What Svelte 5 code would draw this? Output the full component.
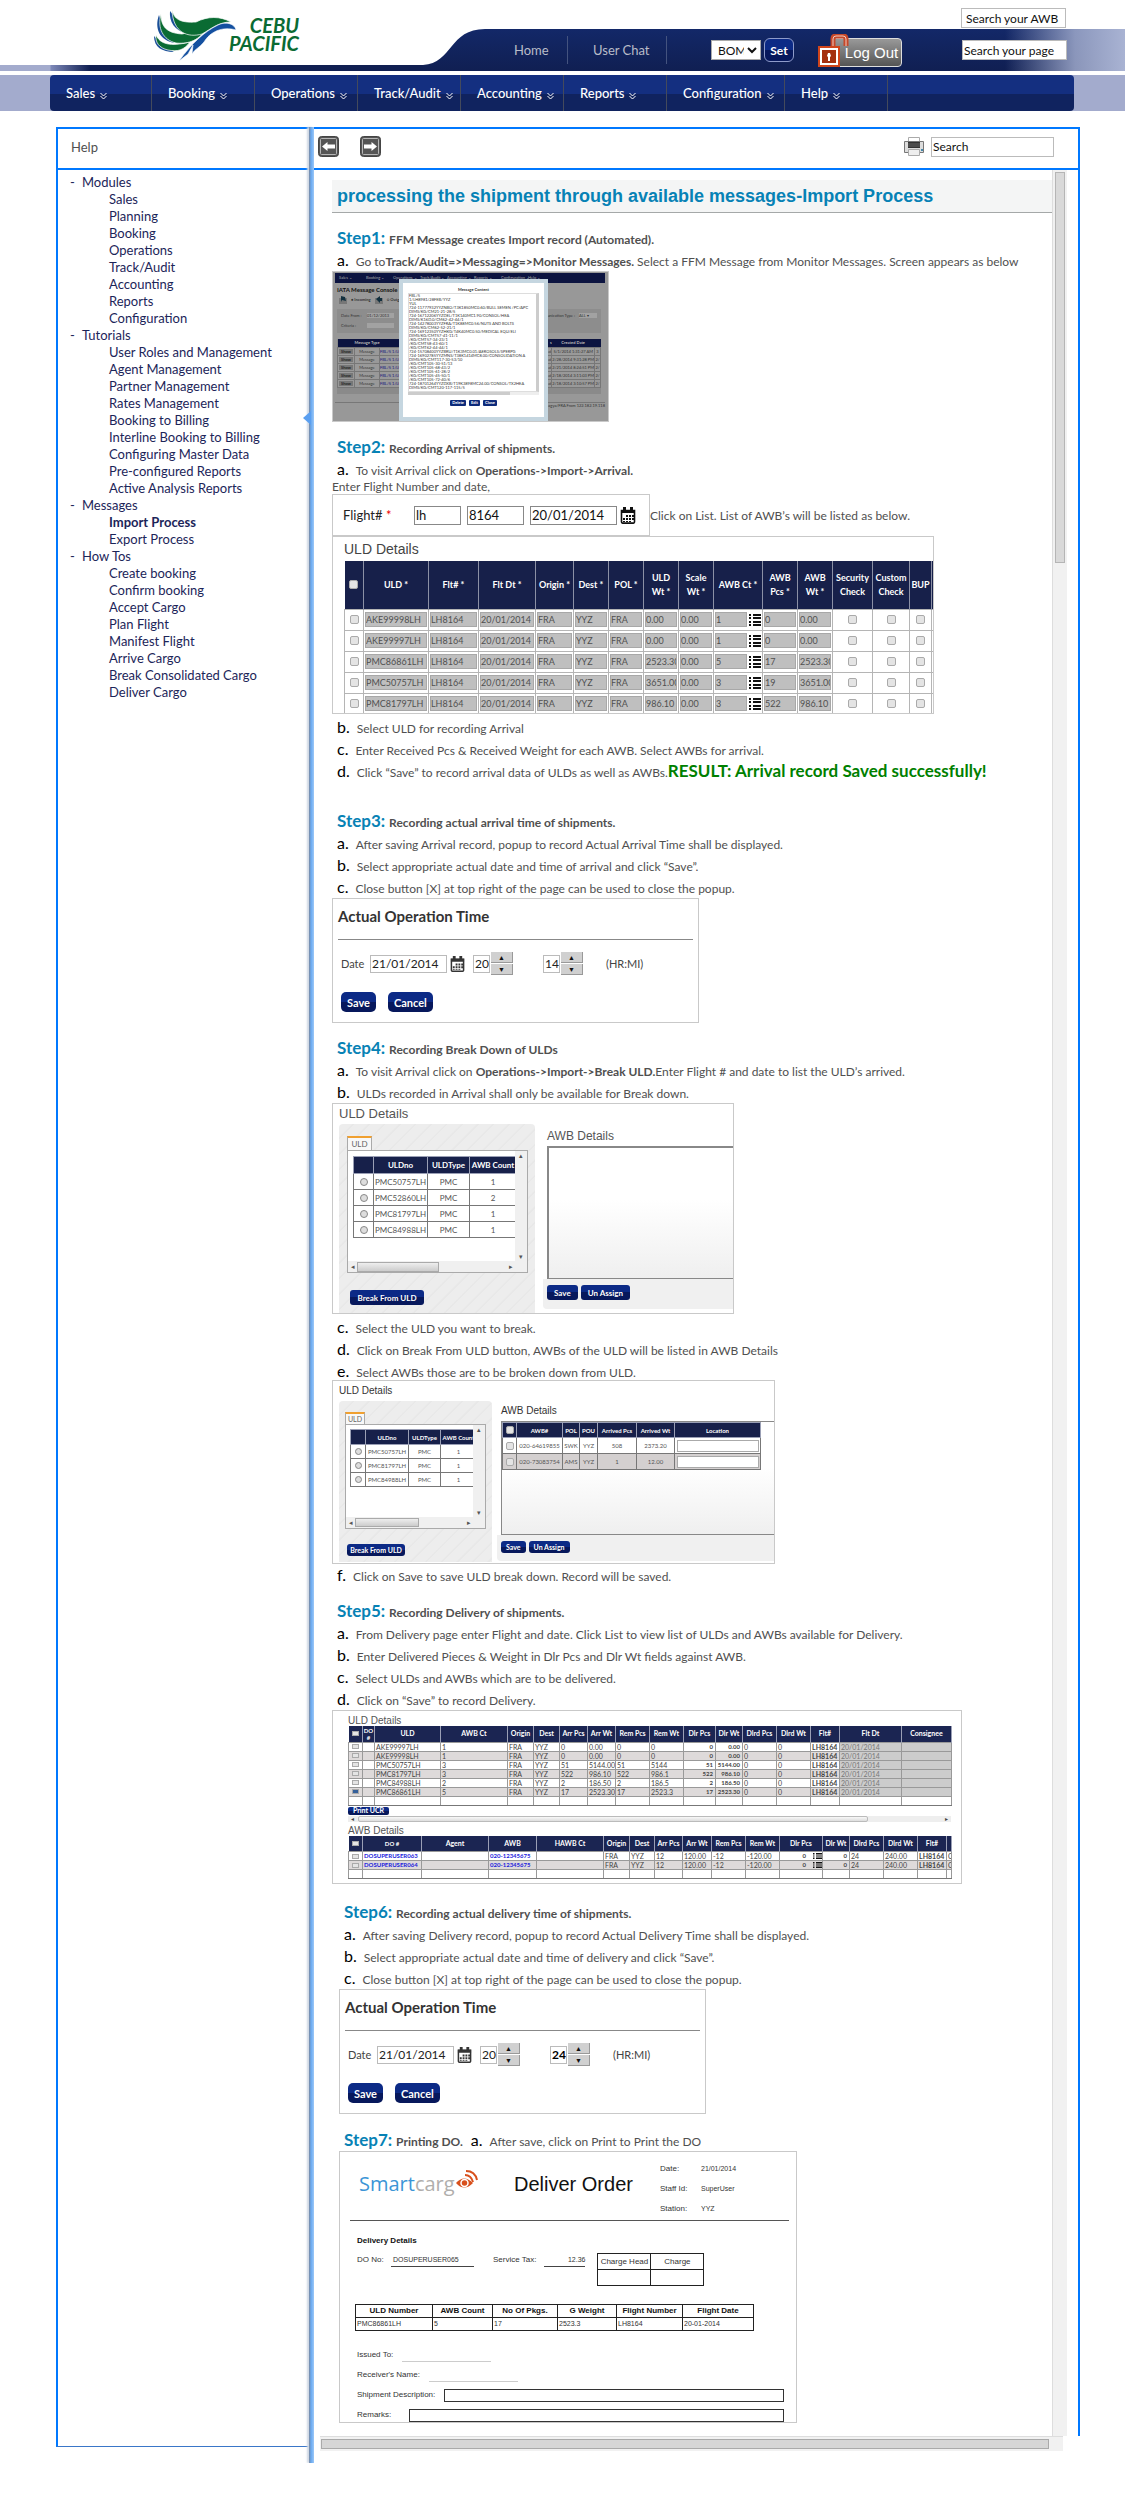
<script>
  const menu = [
    { label: 'Sales', w: 102 }, { label: 'Booking', w: 103 }, { label: 'Operations', w: 103 },
    { label: 'Track/Audit', w: 103 }, { label: 'Accounting', w: 103 }, { label: 'Reports', w: 103 },
    { label: 'Configuration', w: 118 }, { label: 'Help', w: 103 }
  ];
  const tree = [
    { name: 'Modules', items: ['Sales', 'Planning', 'Booking', 'Operations', 'Track/Audit', 'Accounting', 'Reports', 'Configuration'] },
    { name: 'Tutorials', items: ['User Roles and Management', 'Agent Management', 'Partner Management', 'Rates Management', 'Booking to Billing', 'Interline Booking to Billing', 'Configuring Master Data', 'Pre-configured Reports', 'Active Analysis Reports'] },
    { name: 'Messages', items: ['Import Process', 'Export Process'] },
    { name: 'How Tos', items: ['Create booking', 'Confirm booking', 'Accept Cargo', 'Plan Flight', 'Manifest Flight', 'Arrive Cargo', 'Break Consolidated Cargo', 'Deliver Cargo'] }
  ];

  const consoleMenu = ['Sales', 'Booking', 'Operations', 'Track/Audit', 'Accounting', 'Reports', 'Configuration', 'Help'];
  const consoleRows = [
    ['5/1/2014 1:31:27 AM', '3'], ['2/28/2014 9:31:28 PM', '2/'], ['2/21/2014 8:24:51 PM', '2/'],
    ['2/18/2014 3:11:03 PM', '2/'], ['2/18/2014 3:10:57 PM', '2/']
  ];
  const message = `FBL/5
1/LH8981/28FEB/YYZ
YUL
724-11777932YYZNBO/T3K1850MC0.60/BULL SEMEN /PC/APC
DIMS/KG/CM21-21-28/5
724-16712206YYZDEL/T1K140MC1.90/CONSOL/HEA
DIMS/K16D.0/CM62-42-44/1
724-14278003YYZFRA/T1K88MC0.56/NUTS AND BOLTS
DIMS/KG/CM62-52-21/1
724-16912350YYZHKG/T4K40MC0.50/MEDICAL EQU/ELI
DIMS/KG/CMT57-41-11/1
/KG/CMT57-34-23/1
/KG/CMT58-43-60/1
/KG/CMT62-44-44/1
724-15708400YYZBRU/T1K3MC0.01/AEROSOLS/SPERPG
724-16902785YYZMNS/T38K1414MC8.00/CONSOLIDATION A
DIMS/KG/CMT117-30-53/10
/KG/CMT105-30-51/13
/KG/CMT105-68-43/2
/KG/CMT105-61-28/2
/KG/CMT105-45-50/1
/KG/CMT105-72-40/6
724-18701264YYZDXB/T19K3898MC24.00/CONSOL/TX2HEA
DIMS/KG/CMT120-117-115/5`;

  const arrCols = [19, 65, 50, 57, 38, 35, 35, 35, 35, 49, 35, 35, 40, 37, 22, 3];
  const arrHead = ['ULD *', 'Flt# *', 'Flt Dt *', 'Origin *', 'Dest *', 'POL *', 'ULD Wt\u00a0*', 'Scale Wt\u00a0*', 'AWB Ct *', 'AWB Pcs\u00a0*', 'AWB Wt\u00a0*', 'Security Check', 'Custom Check', 'BUP'];
  const arrRows = [
    ['AKE99998LH', '0.00', '1', '0', '0.00'], ['AKE99997LH', '0.00', '1', '0', '0.00'],
    ['PMC86861LH', '2523.30', '5', '17', '2523.30'], ['PMC50757LH', '3651.00', '3', '19', '3651.00'],
    ['PMC81797LH', '986.10', '3', '522', '986.10']
  ].map(([u, w, c, p, aw]) => [u, 'LH8164', '20/01/2014', 'FRA', 'YYZ', 'FRA', w, '0.00', c, p, aw]);

  const ulds1 = [['PMC50757LH', 1], ['PMC52860LH', 2], ['PMC81797LH', 1], ['PMC84988LH', 1]];
  const ulds2 = [['PMC50757LH', 1], ['PMC81797LH', 1], ['PMC84988LH', 1]];
  const awbCols = [14, 46, 17, 18, 39, 38, 86];
  const awbRows = [['020-64619855', 'SWK', 'YYZ', '508', '2373.20'], ['020-73083754', 'AMS', 'YYZ', '1', '12.00']];

  const dlvCols = [14, 12, 66, 67, 26, 26, 28, 28, 34, 34, 32, 27, 34, 34, 29, 62, 50];
  const dlvHead = ['DO #', 'ULD', 'AWB Ct', 'Origin', 'Dest', 'Arr Pcs', 'Arr Wt', 'Rem Pcs', 'Rem Wt', 'Dlr Pcs', 'Dlr Wt', 'Dlrd Pcs', 'Dlrd Wt', 'Flt#', 'Flt Dt', 'Consignee'];
  const dlvRows = [
    ['AKE99997LH', '1', '0', '0.00', '0', '0', '0', '0.00'], ['AKE99998LH', '1', '0', '0.00', '0', '0', '0', '0.00'],
    ['PMC50757LH', '3', '51', '5144.00', '51', '5144', '51', '5144.00'], ['PMC81797LH', '3', '522', '986.10', '522', '986.1', '522', '986.10'],
    ['PMC84988LH', '2', '2', '186.50', '2', '186.5', '2', '186.50'], ['PMC86861LH', '5', '17', '2523.30', '17', '2523.3', '17', '2523.30']
  ].map(([u, ct, p, w, rp, rw, dp, dw]) => ['', u, ct, 'FRA', 'YYZ', p, w, rp, rw, dp, dw, '0', '0', 'LH8164', '20/01/2014', '']);
  const dawCols = [14, 59, 67, 48, 67, 26, 25, 28, 29, 34, 34, 43, 27, 34, 34, 29, 5];
  const dawHead = ['DO #', 'Agent', 'AWB', 'HAWB Ct', 'Origin', 'Dest', 'Arr Pcs', 'Arr Wt', 'Rem Pcs', 'Rem Wt', 'Dlr Pcs', 'Dlr Wt', 'Dlrd Pcs', 'Dlrd Wt', 'Flt#', ''];
  const dawRows = ['063', '064'].map((n) => ['DOSUPERUSER' + n, '', '020-12345675', '', 'FRA', 'YYZ', '12', '120.00', '-12', '-120.00', '0', '0', '24', '240.00', 'LH8164', 'C']);

  const doCols = [77, 60, 65, 59, 66, 71];
  const doHead = ['ULD Number', 'AWB Count', 'No Of Pkgs.', 'G Weight', 'Flight Number', 'Flight Date'];
  const doRow = ['PMC86861LH', '5', '17', '2523.3', 'LH8164', '20-01-2014'];
</script>

{#snippet cols(list)}
  <colgroup>{#each list as w}<col style:width="{w}px" />{/each}</colgroup>
{/snippet}

{#snippet calendar()}
  <svg class="cal" viewBox="0 0 16 17" aria-hidden="true">
    <path d="M1.5 3.5h13v11.6q0 1-1 1h-11q-1 0-1-1z" fill="#fff" stroke="#111" stroke-width="1.6" />
    <path d="M1 3h14v3H1zM3 0h3v4H3zM10 0h3v4h-3z" fill="#111" />
    <path d="M6 8h2v2H6zM9 8h2v2H9zM12 8h2v2h-2zM3 11h2v2H3zM6 11h2v2H6zM9 11h2v2H9zM12 11h2v2h-2zM3 14h2v1H3zM6 14h2v1H6zM9 14h2v1H9z" fill="#111" />
  </svg>
{/snippet}

{#snippet listIcon()}
  <svg class="list-icon" viewBox="0 0 12 12" preserveAspectRatio="none" aria-hidden="true">
    <path d="M0 0h2v2H0zM4 0h8v2H4zM0 3h2v2H0zM4 3h8v2H4zM0 7h2v2H0zM4 7h8v2H4zM0 10h2v2H0zM4 10h8v2H4z" fill="#111" />
  </svg>
{/snippet}

{#snippet step(n, title)}
  <h2 class="step-title"><span>Step{n}:</span> {title}</h2>
{/snippet}

{#snippet opTime(id, minutes, strong)}
  <form class="shot op" onsubmit={(e) => e.preventDefault()}>
    <h3>Actual Operation Time</h3>
    <div class="op-row">
      <label for="{id}-date">Date</label>
      <input id="{id}-date" class="op-date" value="21/01/2014" />
      {@render calendar()}
      <span class="spin">
        <input aria-label="Hours" value="20" />
        <span class="arrows"><button type="button" aria-label="Hour up">▲</button><button type="button" aria-label="Hour down">▼</button></span>
      </span>
      <span class="spin minutes">
        <input aria-label="Minutes" class:strong value={minutes} />
        <span class="arrows"><button type="button" aria-label="Minute up">▲</button><button type="button" aria-label="Minute down">▼</button></span>
      </span>
      <span class="unit">(HR:MI)</span>
    </div>
    <div class="op-actions"><button class="navy">Save</button><button type="button" class="navy">Cancel</button></div>
  </form>
{/snippet}

{#snippet uldPanel(rows, widths, group)}
  <div class="uld-panel">
    <button class="tab">ULD</button>
    <div class="uld-list">
      <div class="uld-view">
        <table>
          {@render cols(widths)}
          <thead><tr><th></th><th>ULDno</th><th>ULDType</th><th>AWB Count</th></tr></thead>
          <tbody>
            {#each rows as [u, c]}
              <tr><td><input type="radio" name={group} aria-label={u} /></td><td>{u}</td><td>PMC</td><td>{c}</td></tr>
            {/each}
          </tbody>
        </table>
      </div>
      <div class="vbar"><i>▴</i><i>▾</i></div>
      <div class="hbar"><i>◂</i><b></b><i>▸</i></div>
    </div>
    <button class="navy">Break From ULD</button>
  </div>
{/snippet}

<header class="top">
  <div class="brand">
    <a href="#home" class="logo">
      <svg viewBox="0 0 84 52" aria-hidden="true">
        <g fill="#1a4f98">
          <path d="M16 2C15 12 20 22 34 25L24 12z" /><path d="M5 6C0 20 6 31 20 34L10 22z" /><path d="M0 27C0 38 8 43 20 43L8 36z" />
        </g>
        <g fill="#0a6b33" stroke="#fff" stroke-width=".7">
          <path d="M2 26C6 35 16 38 36 33 30 41 24 43 14 41 5 39 1 33 2 26z" />
          <path d="M7 5C7 17 12 24 28 25L52 20C44 33 32 35 22 34 9 31 3 19 7 5z" />
          <path d="M18 1C20 10 26 14 42 13 54 7 66 7 77 13 64 13 57 20 48 25 34 29 19 24 18 1z" />
        </g>
        <path d="M82 21C81 15 72 12 64 16 50 23 38 34 25 52L34 45 39 36 38 45C42 39 44 40 50 33 56 23 68 17 82 21z" fill="#1450a0" stroke="#fff" stroke-width=".6" />
      </svg>
      <span>CEBU<br />PACIFIC</span>
    </a>
  </div>
  <svg class="swoop" viewBox="0 0 62 42" aria-hidden="true">
    <defs><linearGradient id="sw" x2="0" y2="1"><stop offset="0" stop-color="#132868" /><stop offset="1" stop-color="#101f52" /></linearGradient></defs>
    <path d="M0 36C30 34 26 0 62 0V42H0z" fill="url(#sw)" />
  </svg>
  <div class="top-right">
    <input class="find" aria-label="Search your AWB" value="Search your AWB" />
    <nav class="bar">
      <a href="#home">Home</a><a href="#chat" class="chat">User Chat</a>
      <select aria-label="Station"><option>BOM</option></select>
      <button class="navy set">Set</button>
      <button class="logout">
        <svg viewBox="0 0 31 33" aria-hidden="true">
          <path d="M15 15V5q0-3 3-3h7q3 0 3 3v7" fill="none" stroke="#c5482a" stroke-width="5" />
          <path d="M15 15V5q0-3 3-3h7q3 0 3 3v7" fill="none" stroke="#f3c9bc" stroke-width="1" />
          <path d="M1 13h20v19H1z" fill="#fff" stroke="#d0451b" stroke-width="2" /><path d="M4 16h14v13H4z" fill="#a5300f" />
          <path d="M10 19h2l1 3-1 1v4h-2v-4l-1-1z" fill="#fff" />
        </svg>
        <span>Log Out</span>
      </button>
      <input class="find page" aria-label="Search your page" value="Search your page" />
    </nav>
  </div>
</header>

<div class="menu-band">
  <nav class="menu">
    {#each menu as m}
      <a href="#{m.label}" style:width="{m.w}px">{m.label}
        <svg viewBox="0 0 7 8" aria-hidden="true"><path d="M.5 1 3.5 4 6.5 1M.5 4 3.5 7 6.5 4" fill="none" stroke="#fff" stroke-width="1" /></svg>
      </a>
    {/each}
  </nav>
</div>

<div class="frame">
  <aside>
    <div class="side-head">Help</div>
    <ul class="tree">
      {#each tree as g}
        <li><span class="group"><i>-</i>{g.name}</span>
          <ul>{#each g.items as it}<li><a href="#{it}" class:current={it === 'Import Process'}>{it}</a></li>{/each}</ul>
        </li>
      {/each}
    </ul>
  </aside>
  <div class="splitter"><svg viewBox="0 0 8 14" aria-hidden="true"><path d="M8 0v14L0 7z" fill="#5a9ff0" /></svg></div>
  <main>
    <div class="tools">
      <button aria-label="Back"><svg viewBox="0 0 21 21"><rect x=".5" y=".5" width="20" height="20" rx="3" fill="#555" stroke="#444" /><rect x="2.5" y="2.5" width="16" height="16" rx="1" fill="none" stroke="#b5b5b5" /><path d="M4 10.5 9.5 6v2.500H17v4H9.500V15z" fill="#fff" /></svg></button>
      <button aria-label="Forward"><svg viewBox="0 0 21 21"><rect x=".5" y=".5" width="20" height="20" rx="3" fill="#555" stroke="#444" /><rect x="2.5" y="2.5" width="16" height="16" rx="1" fill="none" stroke="#b5b5b5" /><path d="M17 10.5 11.500 6v2.500H4v4h7.500V15z" fill="#fff" /></svg></button>
      <button class="print" aria-label="Print"><svg viewBox="0 0 20 19"><path d="M4.5.5h11V6h-11z" fill="#fff" stroke="#aaa" /><path d="M.5 4.5h19v11H.5z" fill="#ddd" stroke="#777" /><path d="M4 5h12v6H4z" fill="#333" /><path d="M4 7h12M4 9h12" stroke="#666" /><path d="M4.5 12.500h11v6h-11z" fill="#eee" stroke="#aaa" /><path d="M17 12h2v2h-2z" fill="#48a" /></svg></button>
      <input class="find search" aria-label="Search" value="Search" />
    </div>
    <div class="viewport">
      <article>
        <h1>processing the shipment through available messages-Import Process</h1>

        <section>
          {@render step(1, 'FFM Message creates Import record (Automated).')}
          <p class="item"><b>a.</b><span>Go to<strong>Track/Audit=&gt;Messaging=&gt;Monitor Messages.</strong> Select a FFM Message from Monitor Messages. Screen appears as below</span></p>
          <div class="shot console">
            <div class="c-menu">{#each consoleMenu as m}<span>{m} ⌄</span>{/each}</div>
            <h3>IATA Message Console</h3>
            <div class="c-radios"><svg viewBox="0 0 8 8" aria-hidden="true"><path d="M0 2h8v6H0z" fill="#777" /><path d="M2 0l4 1 1 4-4-1-1 2z" fill="#12303f" /></svg>● Incoming<svg viewBox="0 0 8 8" aria-hidden="true"><path d="M0 2h8v6H0z" fill="#777" /><path d="M5 0L1 3l4 4V5h2V2H5z" fill="#12303f" /></svg>○ Outg</div>
            <div class="c-filter">
              <span>Date From :</span><i>01/12/2013</i><span class="c-type">mmunication Type :</span><i class="c-all">ALL ▾</i>
              <span>Criteria :</span><i></i>
            </div>
            <div class="c-table">
              <table>
                {@render cols([17, 24, 130, 44, 42, 6])}
                <thead><tr><th></th><th>Message Type</th><th></th><th class="right">s</th><th>Created Date</th><th></th></tr></thead>
                <tbody>{#each consoleRows as [d, e]}<tr><td><button>Show</button></td><td>Message</td><td class="link">FBL/5 1/LH8</td><td class="right">ed</td><td>{d}</td><td>{e}</td></tr>{/each}</tbody>
              </table>
            </div>
            <p>Bhagya/FRA From 122.182.19.118</p>
            <div class="modal">
              <h4>Message Content</h4>
              <pre>{message}</pre>
              <div class="modal-scroll"><b></b></div>
              <div class="modal-actions"><button>Delete</button><button>Edit</button><button>Close</button></div>
            </div>
          </div>
        </section>

        <section>
          {@render step(2, 'Recording Arrival of shipments.')}
          <p class="item"><b>a.</b><span>To visit Arrival click on <strong>Operations-&gt;Import-&gt;Arrival.</strong></span></p>
          <p class="lead">Enter Flight Number and date,</p>
          <div class="flight-line">
            <form class="shot flight" onsubmit={(e) => e.preventDefault()}>
              <label for="flt">Flight# <em>*</em></label>
              <input id="flt" class="f-a" value="lh" /><input class="f-b" aria-label="Flight number" value="8164" /><input class="f-c" aria-label="Flight date" value="20/01/2014" />
              {@render calendar()}
            </form>
            <span>Click on List. List of AWB’s will be listed as below.</span>
          </div>
          <div class="shot arrivals">
            <h3>ULD Details</h3>
            <table>
              {@render cols(arrCols)}
              <thead><tr><th><input type="checkbox" aria-label="Select all" /></th>{#each arrHead as h}<th>{h}</th>{/each}<th></th></tr></thead>
              <tbody>
                {#each arrRows as r}
                  <tr>
                    <td class="mid"><input type="checkbox" disabled aria-label={r[0]} /></td>
                    {#each r as v, i}<td><div><input class="cell" aria-label={arrHead[i]} value={v} />{#if i === 8}{@render listIcon()}{/if}</div></td>{/each}
                    {#each ['Security', 'Custom', 'BUP'] as c}<td class="mid"><input type="checkbox" aria-label={c} /></td>{/each}
                    <td></td>
                  </tr>
                {/each}
              </tbody>
            </table>
          </div>
          <p class="item after"><b>b.</b><span>Select ULD for recording Arrival</span></p>
          <p class="item"><b>c.</b><span>Enter Received Pcs &amp; Received Weight for each AWB. Select AWBs for arrival.</span></p>
          <p class="item"><b>d.</b><span>Click “Save” to record arrival data of ULDs as well as AWBs.<strong class="result">RESULT: Arrival record Saved successfully!</strong></span></p>
        </section>

        <section class="far">
          {@render step(3, 'Recording actual arrival time of shipments.')}
          <p class="item"><b>a.</b><span>After saving Arrival record, popup to record Actual Arrival Time shall be displayed.</span></p>
          <p class="item"><b>b.</b><span>Select appropriate actual date and time of arrival and click “Save”.</span></p>
          <p class="item"><b>c.</b><span>Close button [X] at top right of the page can be used to close the popup.</span></p>
          {@render opTime('arrival', '14', false)}
        </section>

        <section>
          {@render step(4, 'Recording Break Down of ULDs')}
          <p class="item"><b>a.</b><span>To visit Arrival click on <strong>Operations-&gt;Import-&gt;Break ULD.</strong>Enter Flight # and date to list the ULD’s arrived.</span></p>
          <p class="item"><b>b.</b><span>ULDs recorded in Arrival shall only be available for Break down.</span></p>
          <div class="shot break">
            <h3>ULD Details</h3>
            <div class="halves">
              {@render uldPanel(ulds1, [20, 54, 42, 47], 'u1')}
              <div class="awb-panel">
                <h3>AWB Details</h3>
                <div class="awb-list"></div>
                <div class="awb-actions"><button class="navy">Save</button><button class="navy">Un Assign</button></div>
              </div>
            </div>
          </div>
          <p class="item after"><b>c.</b><span>Select the ULD you want to break.</span></p>
          <p class="item"><b>d.</b><span>Click on Break From ULD button, AWBs of the ULD will be listed in AWB Details</span></p>
          <p class="item"><b>e.</b><span>Select AWBs those are to be broken down from ULD.</span></p>
          <div class="shot break small tight">
            <h3>ULD Details</h3>
            <div class="halves">
              {@render uldPanel(ulds2, [15, 43, 32, 36], 'u2')}
              <div class="awb-panel">
                <h3>AWB Details</h3>
                <div class="awb-list">
                  <table>
                    {@render cols(awbCols)}
                    <thead><tr><th><input type="checkbox" aria-label="Select all" /></th><th>AWB#</th><th>POL</th><th>POU</th><th>Arrived Pcs</th><th>Arrived Wt</th><th>Location</th></tr></thead>
                    <tbody>{#each awbRows as r}<tr><td><input type="checkbox" aria-label={r[0]} /></td>{#each r as v}<td>{v}</td>{/each}<td><input class="loc" aria-label="Location" /></td></tr>{/each}</tbody>
                  </table>
                </div>
                <div class="awb-actions"><button class="navy">Save</button><button class="navy">Un Assign</button></div>
              </div>
            </div>
          </div>
          <p class="item"><b>f.</b><span>Click on Save to save ULD break down. Record will be saved.</span></p>
        </section>

        <section>
          {@render step(5, 'Recording Delivery of shipments.')}
          <p class="item"><b>a.</b><span>From Delivery page enter Flight and date. Click List to view list of ULDs and AWBs available for Delivery.</span></p>
          <p class="item"><b>b.</b><span>Enter Delivered Pieces &amp; Weight in Dlr Pcs and Dlr Wt fields against AWB.</span></p>
          <p class="item"><b>c.</b><span>Select ULDs and AWBs which are to be delivered.</span></p>
          <p class="item"><b>d.</b><span>Click on “Save” to record Delivery.</span></p>
          <div class="shot delivery">
            <h3>ULD Details</h3>
            <table>
              {@render cols(dlvCols)}
              <thead><tr><th><input type="checkbox" aria-label="Select all" /></th>{#each dlvHead as h}<th>{h}</th>{/each}</tr></thead>
              <tbody>
                {#each dlvRows as r, n}
                  <tr><td class="mid"><input type="checkbox" aria-label={r[1]} checked={n === 5} /></td>{#each r as v, i}<td class:entry={i === 9 || i === 10} class:flt={i === 13} class:grey={i > 13}>{v}</td>{/each}</tr>
                {/each}
                <tr>{#each dlvCols as _}<td></td>{/each}</tr>
              </tbody>
            </table>
            <button class="navy">Print UCR</button>
            <div class="long-bar"><i>◂</i><b></b><i>▸</i></div>
            <h3>AWB Details</h3>
            <table>
              {@render cols(dawCols)}
              <thead><tr><th><input type="checkbox" aria-label="Select all" /></th>{#each dawHead as h}<th>{h}</th>{/each}</tr></thead>
              <tbody>
                {#each dawRows as r}
                  <tr><td class="mid"><input type="checkbox" aria-label={r[0]} /></td>{#each r as v, i}<td class:link={i === 0 || i === 2} class:entry={i === 10 || i === 11} class:with-icon={i === 10} class:flt={i === 14}>{v}{#if i === 10}{@render listIcon()}{/if}</td>{/each}</tr>
                {/each}
                <tr>{#each dawCols as _}<td></td>{/each}</tr>
              </tbody>
            </table>
          </div>
        </section>

        <section class="indent">
          {@render step(6, 'Recording actual delivery time of shipments.')}
          <p class="item"><b>a.</b><span>After saving Delivery record, popup to record Actual Delivery Time shall be displayed.</span></p>
          <p class="item"><b>b.</b><span>Select appropriate actual date and time of delivery and click “Save”.</span></p>
          <p class="item"><b>c.</b><span>Close button [X] at top right of the page can be used to close the popup.</span></p>
          {@render opTime('delivery', '24', true)}
        </section>

        <section class="indent">
          <div class="inline-step">
            {@render step(7, 'Printing DO.')}
            <p class="item"><b>a.</b><span>After save, click on Print to Print the DO</span></p>
          </div>
          <div class="shot order">
            <div class="o-head">
              <div class="smart"><span>Smart</span><i>carg</i>
                <svg viewBox="0 0 24 20" aria-hidden="true"><path d="M1 13q8-9 17 0-9 9-17 0z" fill="#d8501c" /><circle cx="9.5" cy="13" r="3.5" fill="none" stroke="#fff" stroke-width="1.5" /><path d="M10 5q6 0 8 7M11 1q9 0 11 9" fill="none" stroke="#d8501c" stroke-width="2" /></svg>
              </div>
              <h3>Deliver Order</h3>
              <dl><dt>Date:</dt><dd>21/01/2014</dd><dt>Staff Id:</dt><dd>SuperUser</dd><dt>Station:</dt><dd>YYZ</dd></dl>
            </div>
            <h4>Delivery Details</h4>
            <div class="o-row">
              <span>DO No:</span><u class="do-no">DOSUPERUSER065</u><span>Service Tax:</span><u class="tax">12.36</u>
              <table class="charge"><thead><tr><th>Charge Head</th><th>Charge</th></tr></thead><tbody><tr><td></td><td></td></tr></tbody></table>
            </div>
            <table class="o-table">
              {@render cols(doCols)}
              <thead><tr>{#each doHead as h}<th>{h}</th>{/each}</tr></thead>
              <tbody><tr>{#each doRow as v}<td>{v}</td>{/each}</tr></tbody>
            </table>
            <div class="o-fields">
              <label>Issued To:<input class="line short" /></label>
              <label>Receiver's Name:<input class="line" /></label>
              <label>Shipment Description:<input class="box" /></label>
              <label>Remarks:<input class="box wide" /></label>
            </div>
          </div>
        </section>
      </article>
      <div class="page-vbar"><b></b></div>
    </div>
    <div class="page-hbar"><b></b></div>
  </main>
</div>

<style>
  :global(body) { background: #fff; font-family: Lato, 'Liberation Sans', sans-serif; font-size: 12px; color: #505050; }
  :global(*) { box-sizing: border-box; }
  h1, h2, h3, h4, p, ul, dl, dd, pre { margin: 0; padding: 0; font-weight: normal; }
  ul { list-style: none; }
  i, em, u { font-style: normal; text-decoration: none; }
  a { text-decoration: none; color: inherit; }
  input, button, select { font-family: inherit; margin: 0; padding: 0; border-radius: 0; }
  button { border: 0; background: none; }
  svg { display: block; flex: none; }
  table { border-collapse: collapse; table-layout: fixed; }
  th, td { padding: 0; overflow: hidden; white-space: nowrap; }
  input[type='checkbox'] { appearance: none; background: #e4e4e4; border: 1px solid #aaa; border-radius: 2px; width: 9px; height: 9px; display: block; margin: 0 auto; }
  input[type='radio'] { appearance: none; background: #ddd; border: 1px solid #888; border-radius: 50%; width: 8px; height: 8px; display: block; margin: 0 auto; }
  .navy { background: linear-gradient(#0c2a86 50%, #07185c 50%); color: #fff; font-weight: bold; border-radius: 5px; }

  .top { display: flex; height: 71px; }
  .brand { width: 423px; padding: 9px 0 0 154px; background: linear-gradient(90deg, #a3abcd 50px, #7d88b8 51px, #101f52 90px) bottom / 100% 6px no-repeat; }
  .logo { display: flex; width: 150px; }
  .logo svg { width: 84px; height: 52px; }
  .logo span { flex: none; width: 76px; margin-left: -15px; padding-top: 7px; text-align: right; color: #0a6b33; font: italic bold 20px/18px Lato, sans-serif; }
  .swoop { width: 62px; height: 42px; margin-top: 29px; }
  .top-right { flex: 1; display: flex; flex-direction: column; align-items: flex-end; padding-top: 8px; }
  .find { width: 105px; height: 20px; border: 1px solid #bbb; background: #fff; color: #111; font-size: 12px; padding-left: 1px; }
  .top-right > .find { margin: 0 59px 1px 0; padding-left: 4px; }
  .bar { width: 100%; height: 42px; display: flex; align-items: center; padding-right: 58px; color: #b9bcc8; font-size: 13px;
    background: linear-gradient(90deg, transparent calc(100% - 120px), #a9b3d3cc calc(100% - 50px), #a9b3d3), linear-gradient(#132868, #101f52); }
  .bar a { width: 83px; padding-left: 29px; line-height: 28px; border-right: 1px solid #44537f; white-space: nowrap; }
  .bar .chat { width: 99px; padding-left: 25px; }
  .bar select { width: 50px; height: 20px; margin-left: 44px; border: 1px solid #aaa; background: #fff; font-size: 12px; padding-left: 2px; color: #111; }
  .set { width: 30px; height: 24px; margin-left: 3px; border: 1px solid #8e9bca; border-radius: 6px; font-size: 12px; }
  .logout { display: flex; align-items: flex-end; margin-left: 24px; height: 34px; }
  .logout svg { width: 31px; height: 33px; margin-right: -18px; z-index: 1; }
  .logout span { width: 71px; height: 29px; border: 1px solid #ddd; border-radius: 4px; background: linear-gradient(#999, #555); color: #fff; font: 15px/28px 'Liberation Sans', sans-serif; padding-left: 10px; text-align: center; }
  .page { margin-left: auto; }

  .menu-band { margin-top: 4px; padding: 0 51px 0 50px; background: #a3abcd; }
  .menu { display: flex; height: 36px; border-radius: 4px; background: linear-gradient(#142f80 52%, #10235f 52%); }
  .menu a { display: flex; align-items: center; justify-content: flex-start; gap: 5px; padding-left: 16px; border-right: 1px solid #444a5c; color: #fff; font-size: 13px; font-weight: 500; line-height: 36px; white-space: nowrap; }
  .menu svg { width: 7px; height: 8px; margin-top: 6px; }

  .frame { display: flex; margin: 16px 45px 0 56px; }
  aside { width: 253px; margin-bottom: 16px; border: 2px solid #0078ff; border-right: 0; border-bottom: 1px solid #3a76c8; }
  .side-head { height: 41px; border-bottom: 2px solid #0078ff; padding-left: 13px; font-size: 13px; line-height: 36px; }
  .tree { padding: 4px 0 0 12px; font-size: 13px; line-height: 17px; color: #1c2559; }
  .group i { display: inline-block; width: 12px; }
  .tree ul { padding-left: 39px; }
  .current { font-weight: bold; }
  .splitter { width: 5px; background: linear-gradient(90deg, #7d8aa0, #67a8f0 40%, #9cc8f8); box-shadow: -2px 0 2px #d0d8e4; display: flex; justify-content: flex-end; }
  .splitter svg { width: 8px; height: 14px; margin: 284px 3px 0 0; }
  main { flex: 1; min-width: 0; padding-bottom: 12px; }
  .tools { height: 43px; display: flex; align-items: center; border: solid #0078ff; border-width: 2px 2px 2px 0; padding: 0 24px 4px 4px; }
  .tools svg { width: 21px; height: 21px; }
  .tools button { margin-right: 21px; }
  .tools .print { margin: 0 7px 0 auto; }
  .print svg { width: 20px; height: 19px; }
  .tools .search { width: 123px; }
  .viewport { display: flex; border-right: 2px solid #0078ff; padding-right: 11px; }
  article { flex: 1; min-width: 0; padding: 10px 0 13px 18px; }
  .page-vbar { width: 15px; background: #f1f1f1; border-left: 1px solid #ddd; padding: 2px; }
  .page-vbar b { display: block; height: 391px; background: #d9d9d9; border: 1px solid #b5b5b5; }
  .page-hbar { height: 15px; margin: 0 17px 0 6px; background: #f1f1f1; border-top: 1px solid #ddd; padding: 2px 14px 2px 1px; }
  .page-hbar b { display: block; height: 10px; background: #d6d6d6; border: 1px solid #aaa; }

  h1 { height: 33px; background: #f4f5f5; border-bottom: 1px solid #a5a8a8; color: #0782b5; font: bold 18px/32px 'Liberation Sans', sans-serif; padding-left: 5px; }
  section { padding-top: 13px; }
  .far { padding-top: 27px; }
  .step-title { height: 23px; line-height: 23px; padding-left: 5px; font-size: 12px; font-weight: bold; white-space: nowrap; }
  .step-title span { color: #0782b5; font-size: 17px; margin-right: 1px; }
  .item { height: 22px; line-height: 22px; padding-left: 5px; display: flex; align-items: baseline; gap: 7px; white-space: nowrap; }
  .item b { color: #000; font-size: 16px; font-weight: normal; }
  .result { color: #008000; font-size: 17px; line-height: 20px; }
  .after { margin-top: 2px; }
  .lead { line-height: 14px; }
  .indent { padding: 16px 0 0 7px; }
  .indent:last-child { padding-top: 14px; }
  .inline-step { display: flex; align-items: baseline; gap: 4px; height: 23px; }
  .inline-step .item { padding-left: 4px; }
  .shot { border: 1px solid #c9c9c9; background: #fff; overflow: hidden; }
  .tight { margin-top: -2px; }

  .console { position: relative; width: 277px; height: 151px; background: #989898; font-size: 4px; line-height: 5px; color: #333; padding: 1px 0 0 2px; }
  .c-menu { display: flex; width: 270px; height: 10px; background: #0c1440; color: #aaa; line-height: 9px; padding-left: 4px; }
  .c-menu span { width: 27px; white-space: nowrap; }
  .console h3 { font-size: 6px; font-weight: bold; line-height: 13px; color: #111; padding-left: 2px; }
  .c-radios { display: flex; gap: 4px; padding-left: 4px; font-weight: bold; line-height: 8px; }
  .c-radios svg { width: 8px; height: 8px; }
  .c-filter { display: grid; grid-template-columns: 26px 27px 1fr 18px; gap: 4px 0; width: 264px; height: 24px; margin: 5px 0 6px 2px; padding: 4px; background: #8d8d8d; }
  .c-filter i { background: #a2a2a2; height: 5px; }
  .c-type { text-align: right; padding-right: 4px; }
  .c-table { width: 264px; height: 55px; margin-left: 2px; background: #8a8a8a; overflow: hidden; }
  .c-table th { background: #0c1440; color: #bbb; height: 8px; }
  .c-table td { border: 1px solid #777; height: 8px; text-align: center; background: #999; }
  .c-table button { font-size: 4px; background: #777; padding: 0 2px; }
  .console .link { text-align: left; color: #10107a; }
  .console .right { text-align: right; }
  .console p { width: 270px; margin-top: 8px; border-top: 1px solid #777; text-align: right; }
  .modal { position: absolute; left: 66px; top: 7px; width: 149px; height: 142px; border: 4px solid #c5d6e0; background: #fff; padding: 4px 5px 0; }
  .modal h4 { text-align: center; font-weight: bold; line-height: 6px; }
  .modal pre { height: 99px; font: 4px/4px Lato, sans-serif; border: 1px solid #ddd; border-right: 3px solid #ccc; overflow: hidden; }
  .modal-scroll { background: #eee; height: 3px; }
  .modal-scroll b { display: block; width: 78%; height: 3px; background: #ccc; }
  .modal-actions { display: flex; justify-content: center; gap: 3px; margin-top: 5px; }
  .modal-actions button { background: #0c2a7a; color: #fff; font-size: 4px; font-weight: bold; line-height: 6px; padding: 0 2px; border-radius: 1px; }

  .flight-line { display: flex; align-items: center; white-space: nowrap; }
  .flight { width: 318px; height: 42px; display: flex; align-items: center; padding-left: 10px; color: #222; font-size: 13px; }
  .flight label { width: 71px; }
  .flight em { color: #e00; }
  .flight input { height: 19px; border: 1px solid #888; font-size: 13px; color: #111; margin-right: 6px; padding-left: 1px; }
  .flight .f-a { width: 47px; }
  .flight .f-b { width: 57px; }
  .flight .f-c { width: 87px; margin-right: 3px; }
  .cal { width: 16px; height: 17px; }

  .arrivals { width: 602px; height: 178px; padding-left: 11px; }
  .arrivals h3 { font: 14px/24px 'Liberation Sans', sans-serif; color: #444; }
  .arrivals table { width: 590px; }
  .arrivals th { height: 48px; background: #17204a; color: #fff; border-right: 1px solid #8b90a5; font-size: 9px; font-weight: bold; line-height: 14px; white-space: normal; }
  .arrivals td { height: 21px; border: 1px solid #b5b5b5; }
  .arrivals td div { display: flex; align-items: center; gap: 2px; padding: 0 1px; }
  .cell { flex: 1; min-width: 0; width: 100%; height: 15px; border: 1px solid #a8a8a8; background: #bfbfbf; color: #505050; font-size: 9px; }
  .list-icon { width: 12px; height: 12px; }

  .op { width: 367px; height: 125px; padding: 0 5px; color: #444; }
  .op h3 { height: 41px; border-bottom: 1px solid #888; color: #333; font-size: 15px; font-weight: bold; line-height: 34px; }
  .op-row { display: flex; align-items: center; height: 47px; padding-left: 3px; font-size: 11px; }
  .op-row label { width: 29px; }
  .op-row input { height: 18px; border: 1px solid #bbb; font-size: 12px; color: #222; padding-left: 1px; }
  .op-date { width: 77px; margin-right: 3px; }
  .op .cal { width: 15px; height: 16px; opacity: .85; margin-right: 8px; }
  .spin { display: flex; align-items: center; }
  .spin input { width: 17px; }
  .spin .strong { font-weight: bold; color: #000; }
  .arrows { display: flex; flex-direction: column; gap: 1px; margin-left: 1px; }
  .arrows button { width: 22px; height: 11px; background: #d0d0d0; border: solid #999; border-width: 0 1px 1px 0; font-size: 7px; line-height: 9px; color: #111; }
  .minutes { margin-left: 30px; }
  .unit { margin-left: 23px; }
  .op-actions { display: flex; gap: 12px; padding: 5px 0 0 3px; }
  .op-actions button { height: 20px; font-size: 11px; padding: 0 6px; }

  .break { width: 402px; height: 211px; padding-left: 6px; font-size: 7px; color: #555; }
  .break h3 { font: 13px/20px 'Liberation Sans', sans-serif; color: #555; }
  .halves { display: flex; height: 190px; }
  .uld-panel { width: 196px; background: repeating-linear-gradient(135deg, #ededed 0 9px, #e8e8e8 10px 11px); border-radius: 4px 4px 0 0; padding: 12px 7px 0 8px; }
  .tab { display: block; width: 25px; height: 14px; border: 1px solid #aaa; border-top: 2px solid #f0a030; border-bottom: 0; background: #f8f8f8; color: #666; font-size: 8px; line-height: 12px; }
  .uld-list { display: grid; grid-template-columns: 1fr 12px; grid-template-rows: 1fr 11px; height: 123px; border: 1px solid #aaa; background: #fff; }
  .uld-view { padding: 5px 0 0 5px; overflow: hidden; }
  .break table { width: 163px; }
  .break th { background: #17204a; color: #fff; height: 17px; border: 1px solid #9a9fb5; font-weight: bold; font-size: 8px; }
  .break td { height: 16px; border: 1px solid #777; text-align: center; font-size: 8px; }
  .vbar { background: #f0f0f0; display: flex; flex-direction: column; justify-content: space-between; align-items: center; }
  .hbar { grid-column: 1 / 3; background: #f0f0f0; display: flex; align-items: center; gap: 2px; padding: 0 14px 0 3px; line-height: 9px; }
  .hbar b { width: 82px; height: 10px; border: 1px solid #aaa; background: linear-gradient(#eee, #ccc); margin-right: auto; }
  .uld-panel > .navy { margin: 17px 0 0 3px; width: 74px; height: 15px; font-size: 8px; border-radius: 3px; }
  .awb-panel { flex: 1; min-width: 0; padding-left: 12px; }
  .awb-panel h3 { font-size: 12px; padding-top: 2px; }
  .awb-list { height: 133px; border: solid #888; border-width: 2px 0 1px 2px; background: linear-gradient(#fff 40%, #efefef); }
  .awb-actions { display: flex; gap: 3px; height: 30px; margin-left: -4px; padding: 6px 0 0 4px; background: #f0f0f0; border-radius: 0 0 0 4px; }
  .awb-actions button { height: 15px; font-size: 8px; border-radius: 3px; padding: 0 7px; }
  .small { width: 443px; height: 184px; }
  .small h3 { font-size: 10px; line-height: 20px; color: #333; }
  .small .halves { height: 161px; }
  .small .uld-panel { width: 153px; padding: 11px 6px 0; }
  .small .tab { width: 20px; height: 12px; font-size: 7px; line-height: 9px; }
  .small .uld-list { height: 105px; }
  .small .uld-view { padding: 4px 0 0 4px; }
  .small .uld-view table { width: 126px; }
  .small th { height: 15px; font-size: 6px; }
  .small td { height: 14px; font-size: 6px; }
  .small .hbar b { width: 64px; height: 9px; }
  .small input[type='radio'] { width: 7px; height: 7px; }
  .small .uld-panel > .navy { width: 58px; height: 12px; font-size: 7px; margin: 15px 0 0 2px; }
  .small .awb-panel { padding-left: 9px; }
  .small .awb-panel h3 { font-size: 10px; padding: 0; }
  .small .awb-list { height: 114px; border-width: 1px 0 1px 1px; }
  .small .awb-list table { width: 258px; }
  .small .awb-list td { height: 16px; }
  .small .awb-list tbody tr:last-child { background: #d4d0d0; }
  .small input[type='checkbox'] { width: 8px; height: 8px; }
  .loc { display: block; width: 82px; height: 12px; margin: 0 auto; border: 1px solid #aaa; }
  .small .awb-actions { height: 26px; }
  .small .awb-actions button { height: 12px; font-size: 7px; padding: 0 5px; }

  .delivery { width: 630px; height: 174px; padding: 4px 0 0 15px; font-size: 6px; color: #444; }
  .delivery h3 { font: 10px/11px 'Liberation Sans', sans-serif; color: #555; }
  .delivery table { width: 603px; font-size: 7px; line-height: 8px; }
  .delivery th { height: 16px; background: #1b2552; color: #fff; border-right: 1px solid #9a9fb5; font-size: 7px; font-weight: bold; line-height: 7px; }
  .delivery th:nth-child(2) { white-space: normal; font-size: 6px; }
  .delivery td { height: 9px; border: 1px solid #999; border-width: 1px 1px 0; padding-left: 1px; }
  .delivery tr:nth-child(even) td { background: #dedada; }
  .delivery tbody tr:last-child td { border-bottom: 1px solid #777; background: #fff; }
  .delivery td.entry { background: #fff; text-align: right; font-weight: bold; font-size: 6px; padding: 0 2px 0 0; }
  .delivery td.with-icon { padding-right: 0; }
  .with-icon .list-icon { display: inline-block; width: 9px; height: 6px; margin-left: 7px; vertical-align: middle; }
  .delivery td.flt { background: #fff; font-weight: bold; }
  .delivery tr td.grey { background: #ccc; color: #777; }
  .delivery td.link { color: #2222dd; font-weight: bold; font-size: 6px; }
  .delivery td.mid { padding: 0; }
  .delivery input[type='checkbox'] { width: 7px; height: 5px; border-radius: 0; }
  .delivery input:checked { background: #35609a; }
  .delivery .navy { display: block; width: 41px; height: 8px; margin-top: 1px; border-radius: 2px; font-size: 7px; line-height: 7px; }
  .long-bar { display: flex; justify-content: space-between; width: 603px; height: 6px; margin: 1px 0 3px; background: #eee; line-height: 5px; padding: 0 3px; }
  .long-bar b { width: 510px; margin: 0 auto 0 4px; border: 1px solid #bbb; border-radius: 2px; background: linear-gradient(#f8f8f8, #ddd); }

  .order { width: 458px; height: 272px; padding: 0 7px 0 10px; color: #333; font: 8px/10px 'Liberation Sans', sans-serif; }
  .o-head { display: flex; height: 69px; border-bottom: 1px solid #555; }
  .smart { display: flex; width: 154px; height: 30px; margin-top: 18px; padding-left: 9px; font: 20px/28px 'Open Sans', sans-serif; color: #3b95d6; }
  .smart i { color: #b0aeac; }
  .smart svg { width: 24px; height: 20px; }
  .order h3 { width: 156px; padding: 18px 0 0 10px; font: 20px/28px 'Liberation Sans', sans-serif; color: #111; white-space: nowrap; }
  .order dl { display: grid; grid-template-columns: 41px 1fr; align-content: start; grid-auto-rows: 20px; padding-top: 12px; }
  .order dd { font-size: 7px; }
  .order h4 { font-weight: bold; margin: 15px 0 0 7px; color: #111; }
  .o-row { display: flex; align-items: flex-start; height: 44px; margin-top: 7px; padding-left: 7px; }
  .o-row span, .o-row u { margin-top: 2px; }
  .o-row span:first-child { width: 34px; }
  .o-row u { border-bottom: 1px solid #444; font-size: 7px; height: 12px; line-height: 9px; }
  .do-no { width: 83px; margin-right: 19px; padding-left: 2px; }
  .o-row span + u.tax { width: 41px; margin-left: 8px; text-align: right; }
  .charge { width: 107px; height: 33px; margin-left: 12px; }
  .charge th, .charge td { border: 1px solid #222; height: 16px; font-weight: normal; }
  .o-table { width: 398px; margin: 7px 0 0 5px; }
  .o-table th { height: 13px; border: 1px solid #222; color: #111; }
  .o-table td { height: 13px; border: 1px solid #222; font-size: 7px; padding-left: 1px; }
  .o-fields { padding: 14px 5px 0 7px; }
  .o-fields label { display: flex; align-items: center; height: 20px; }
  .o-fields input { border: 1px solid #333; height: 13px; margin-left: auto; width: 340px; background: #fff; }
  .o-fields .wide { width: 375px; }
  .o-fields .line { width: 89px; margin: 0 0 0 9px; border: 0; border-bottom: 1px solid #ccc; }
</style>
